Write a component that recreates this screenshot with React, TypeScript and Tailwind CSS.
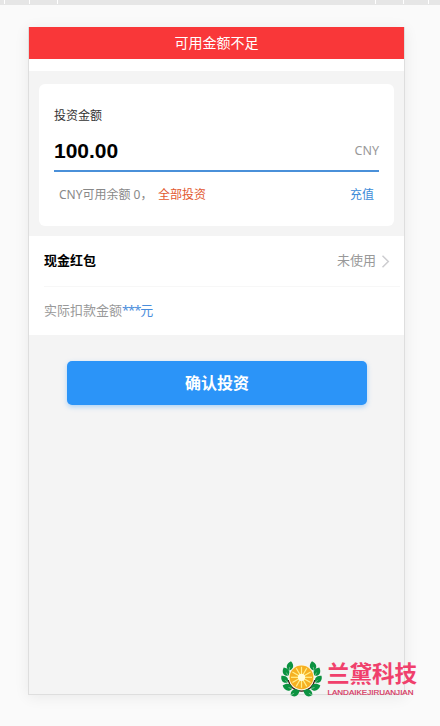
import React from "react";

const leaves = [
  { x: 9, y: 5, r: 12, s: 0.95 },
  { x: 5, y: 10.8, r: -28, s: 0.95 },
  { x: 3.6, y: 18.2, r: -42, s: 0.9 },
  { x: 6.6, y: 26.2, r: -72, s: 1 },
  { x: 14, y: 31.8, r: 62, s: 1 },
];

const rays = [0, 30, 60, 90, 120, 150, 180, 210, 240, 270, 300, 330];

function Leaf({ x, y, r, s }: { x: number; y: number; r: number; s: number }) {
  return (
    <g transform={`translate(${x} ${y}) rotate(${r}) scale(${s})`}>
      <path d="M0 -5.2 C4.6 -2 4.4 3 0 4.8 C-4.4 3 -4.6 -2 0 -5.2Z" fill="#0b9240" />
      <path d="M0 1 V4.8" stroke="#9fd4b0" strokeWidth="0.6" />
    </g>
  );
}

function Wreath() {
  return (
    <svg width="41" height="37" viewBox="0 0 41 37" className="shrink-0 overflow-visible">
      <path d="M7.3 19 A13.4 13.4 0 0 0 33.7 19" fill="none" stroke="#3c1c14" strokeWidth="1.3" />
      {leaves.map((l) => (
        <Leaf key={l.r} {...l} />
      ))}
      <g transform="translate(41 0) scale(-1 1)">
        {leaves.map((l) => (
          <Leaf key={l.r} {...l} />
        ))}
      </g>
      <circle cx="20.5" cy="16.3" r="12.6" fill="#fff6dc" />
      <circle cx="20.5" cy="16.3" r="11.9" fill="#f6b022" />
      {rays.map((a) => (
        <path
          key={a}
          d="M20.5 16.3 V5.8"
          stroke="#fff08c"
          strokeWidth="1.2"
          transform={`rotate(${a} 20.5 16.3)`}
        />
      ))}
      <circle cx="20.5" cy="16.3" r="3.6" fill="#fffbd8" />
    </svg>
  );
}

function Watermark() {
  return (
    <div className="absolute left-[281px] top-[661px] flex items-start">
      <Wreath />
      <div className="ml-[5px] w-[92px] whitespace-nowrap">
        <div className="h-[25px] pt-[2px] font-['Liberation_Serif','Noto_Sans_CJK_SC',serif] text-[22.5px] font-bold leading-[24px] text-[#f0406c]">
          兰黛科技
        </div>
        <svg width="88" height="9" className="block overflow-visible">
          <text
            x="0.5"
            y="9"
            textLength="86"
            lengthAdjust="spacingAndGlyphs"
            fill="#d5325c"
            stroke="#d5325c"
            strokeWidth="0.2"
            fontSize="7.5"
            fontFamily="Liberation Sans, sans-serif"
          >
            LANDAIKEJIRUANJIAN
          </text>
        </svg>
      </div>
    </div>
  );
}

function Toolbar() {
  return (
    <div className="flex h-[5px] bg-[#e6e6e6]">
      <i className="ml-1 h-1 w-px bg-white" />
      <i className="ml-6 h-1 w-px bg-white" />
      <i className="ml-[27px] h-1 w-px bg-white" />
      <i className="ml-[317px] h-1 w-px bg-white" />
      <i className="ml-[27px] h-1 w-px bg-white" />
      <i className="ml-6 h-1 w-px bg-white" />
    </div>
  );
}

export default function App() {
  return (
    <div className="relative h-[726px] w-[440px] overflow-hidden bg-[#fafafa] font-['Noto_Sans','Noto_Sans_CJK_SC',sans-serif]">
      <Toolbar />
      <main className="ml-7 mt-[22px] h-[668px] w-[377px] border-x border-b border-[#dedede] bg-[#f4f4f4] shadow-[0_2px_14px_rgba(0,0,0,0.07)]">
        <div className="h-8 bg-[#f93739] text-center text-[14px] leading-8 text-white">可用金额不足</div>
        <div className="h-3 bg-white" />
        <section className="mx-[10px] mt-[13px] h-[142px] rounded-md bg-white px-[15px] pt-[22px]">
          <div className="h-[19px] text-[12px] leading-[19px] text-[#333]">投资金额</div>
          <div className="flex h-[47px] items-center justify-between border-b-2 border-[#4a90d9] pt-[6px]">
            <span className="font-['Liberation_Sans',sans-serif] text-[21px] font-bold leading-6 text-black">100.00</span>
            <span className="text-[12.5px] leading-5 text-[#999]">CNY</span>
          </div>
          <div className="flex justify-between px-[5px] pt-[13px] text-[12px] leading-5">
            <div className="flex whitespace-pre text-[#888]">
              <span className="w-[99px]">CNY可用余额 0，</span>
              <span className="text-[#e2582f]">全部投资</span>
            </div>
            <span className="text-[#3b8ad8]">充值</span>
          </div>
        </section>
        <section className="mt-[10px] h-[99px] bg-white pl-[15px] text-[13px]">
          <div className="mr-1 flex h-[51px] items-center justify-between border-b border-[#f7f7f7] pr-[10px]">
            <span className="font-bold text-black">现金红包</span>
            <span className="flex items-center gap-[5px] text-[#999]">
              未使用
              <svg width="9" height="13" viewBox="0 0 9 13" fill="none" stroke="#cdcdd0" strokeWidth="1.5">
                <path d="M1.5 .8 L7.3 6.5 L1.5 12.2" />
              </svg>
            </span>
          </div>
          <div className="flex h-12 items-center text-[#999]">
            实际扣款金额<span className="tracking-[-1.1px] text-[#4a8ddc]">***</span>
            <span className="text-[#4a8ddc]">元</span>
          </div>
        </section>
        <button className="ml-[38px] mt-[26px] block h-11 w-[300px] rounded-[5px] bg-[#2b94f8] text-[16px] font-bold text-white shadow-[0_2px_5px_rgba(43,148,248,0.35)]">
          确认投资
        </button>
      </main>
      <Watermark />
    </div>
  );
}
